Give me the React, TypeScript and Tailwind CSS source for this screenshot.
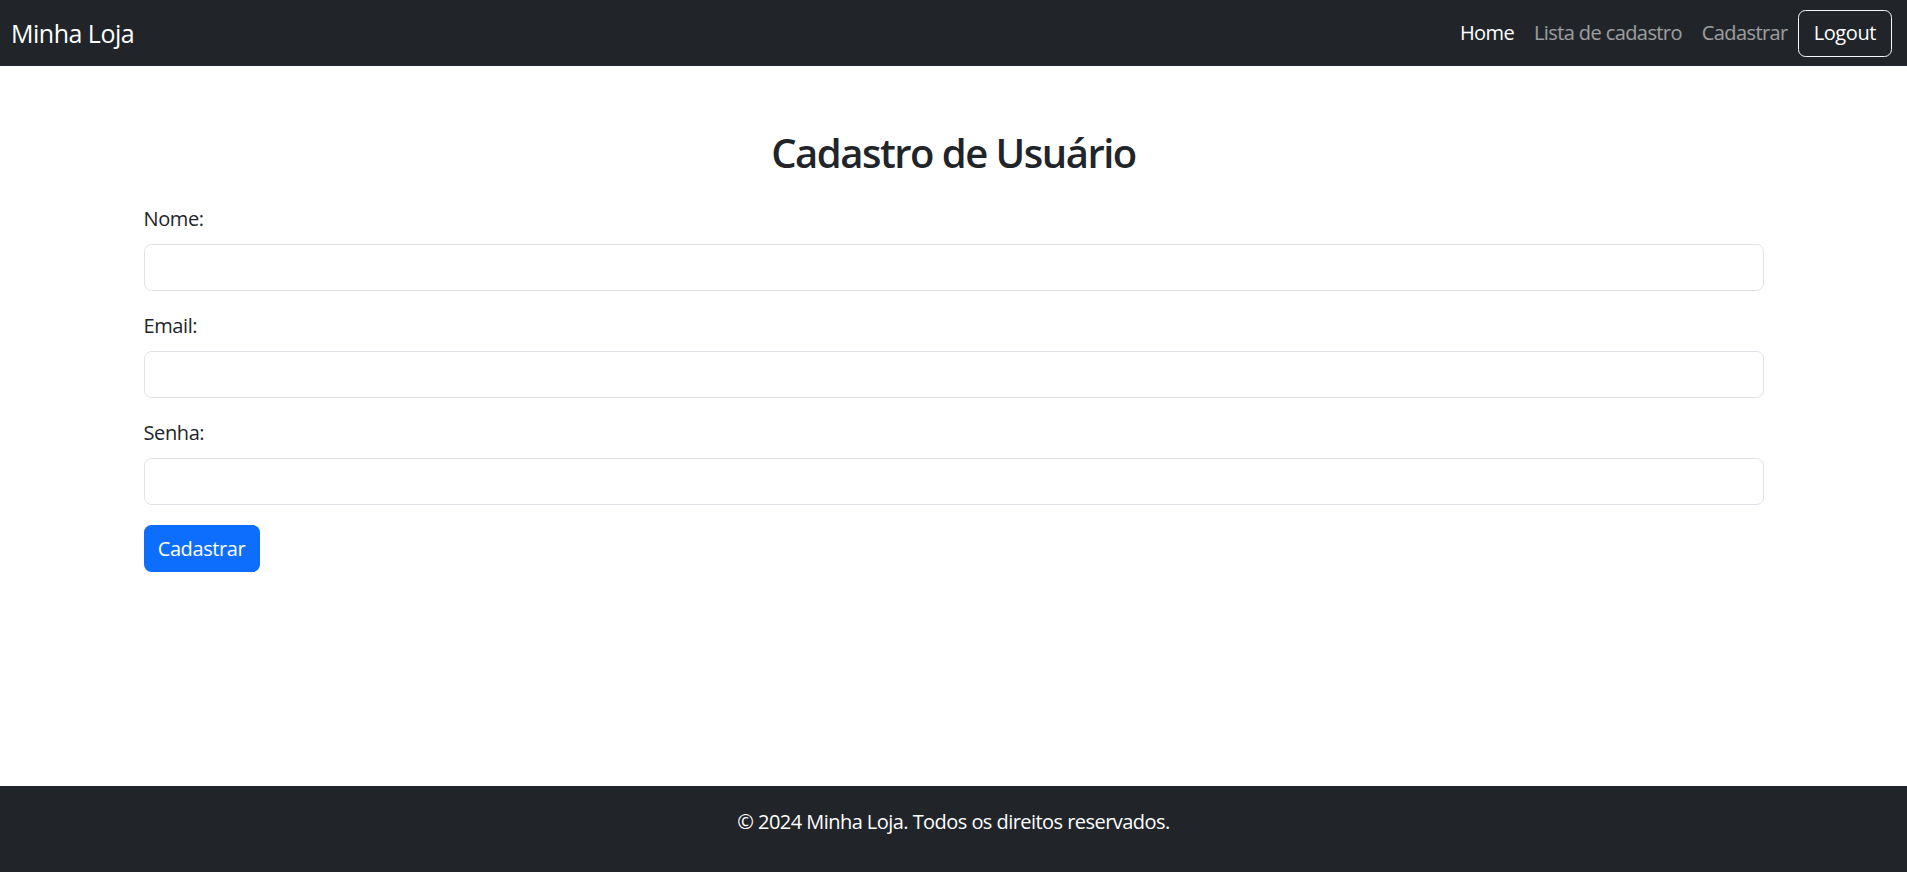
import React from "react";

export default function App() {
  const font = { fontFamily: '"Open Sans", "Noto Sans", sans-serif' };
  return (
    <div className="flex min-h-screen flex-col bg-white text-[#212529]" style={font}>
      <nav className="flex h-[66px] items-center justify-between bg-[#212529] pl-[11px] pr-[15px]">
        <a className="text-[25px] leading-[37px] text-white tracking-[-0.5px]">Minha Loja</a>
        <div className="flex items-center">
          <a className="px-[10px] text-[20px] leading-[30px] text-white tracking-[-0.6px]">Home</a>
          <a className="px-[10px] text-[20px] leading-[30px] text-white/55 tracking-[-0.6px]">Lista de cadastro</a>
          <a className="px-[10px] text-[20px] leading-[30px] text-white/55 tracking-[-0.6px]">Cadastrar</a>
          <button className="h-[47px] rounded-[7.5px] border border-[#f8f9fa] px-[15px] text-[20px] leading-[30px] text-white tracking-[-0.4px]">
            Logout
          </button>
        </div>
      </nav>

      <main className="flex-1">
        <div className="mx-auto w-[1620px] pt-[63px]">
          <h2 className="mb-[27px] text-center text-[40px] font-semibold leading-[48px] tracking-[-1.5px]">
            Cadastro de Usuário
          </h2>
          <form className="flex flex-col">
            <div className="mb-[20px] flex flex-col">
              <label className="mb-[10px] text-[20px] leading-[30px] tracking-[-0.4px]">Nome:</label>
              <input className="h-[47px] rounded-[7.5px] border border-[#dee2e6] px-[15px] text-[20px] outline-none" />
            </div>
            <div className="mb-[20px] flex flex-col">
              <label className="mb-[10px] text-[20px] leading-[30px] tracking-[-0.4px]">Email:</label>
              <input type="email" className="h-[47px] rounded-[7.5px] border border-[#dee2e6] px-[15px] text-[20px] outline-none" />
            </div>
            <div className="mb-[20px] flex flex-col">
              <label className="mb-[10px] text-[20px] leading-[30px] tracking-[-0.4px]">Senha:</label>
              <input type="password" className="h-[47px] rounded-[7.5px] border border-[#dee2e6] px-[15px] text-[20px] outline-none" />
            </div>
            <div>
              <button type="button" className="h-[47px] w-[116px] rounded-[7.5px] bg-[#0d6efd] text-[20px] leading-[30px] text-white tracking-[-0.4px]">
                Cadastrar
              </button>
            </div>
          </form>
        </div>
      </main>

      <footer className="h-[86px] bg-[#212529] pt-[21px] text-center">
        <p className="text-[20px] leading-[30px] text-white tracking-[-0.55px]">© 2024 Minha Loja. Todos os direitos reservados.</p>
      </footer>
    </div>
  );
}
